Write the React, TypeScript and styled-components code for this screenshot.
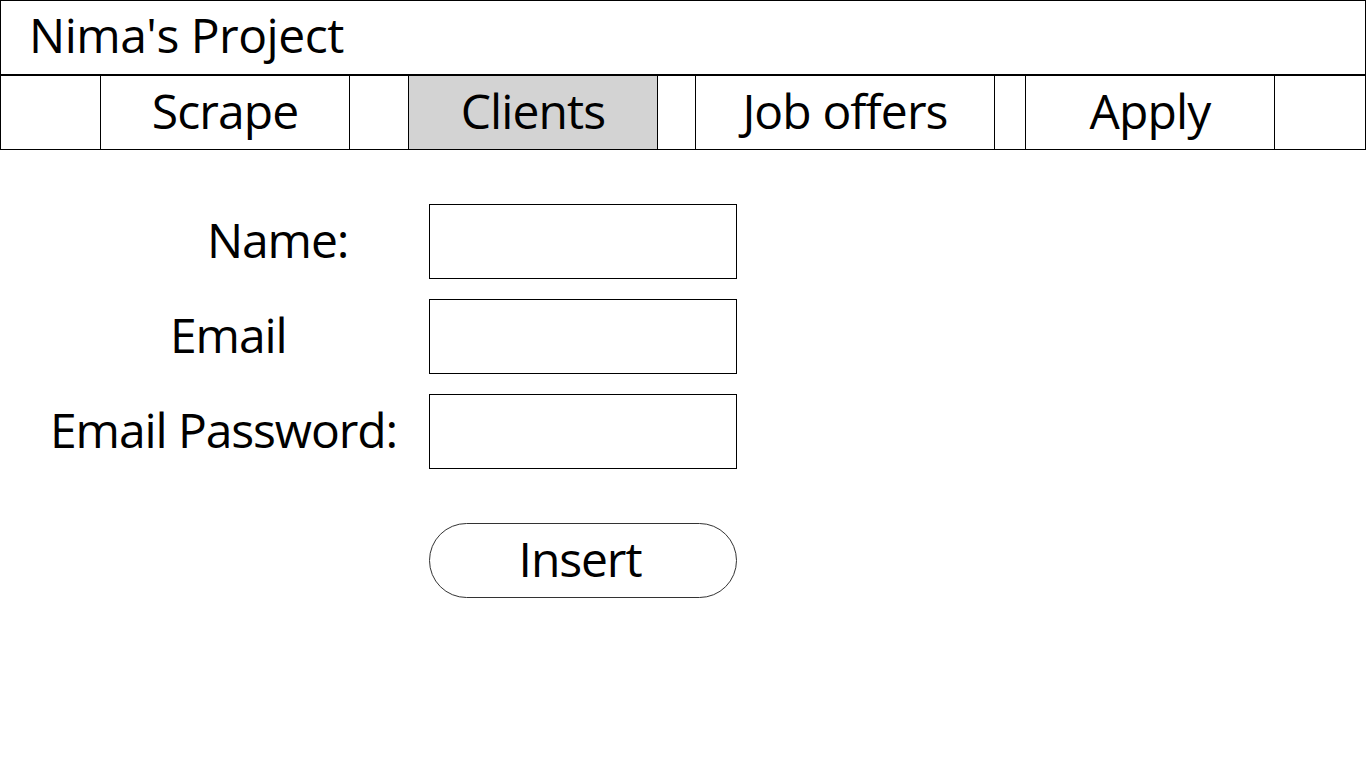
import * as React from 'react';
import styled, { createGlobalStyle } from 'styled-components';

const GlobalStyle = createGlobalStyle`
  * {
    box-sizing: border-box;
  }
  body {
    margin: 0;
    background: #ffffff;
    color: #000000;
    font-family: "Open Sans", "Noto Sans", sans-serif;
  }
`;

const Page = styled.div`
  width: 1366px;
  min-height: 768px;
`;

const Header = styled.header`
  height: 75px;
  border: 1px solid #000;
  display: flex;
  align-items: center;
  padding: 0 0 6px 28px;
  font-size: 48px;
  letter-spacing: -0.5px;
`;

const Nav = styled.nav`
  height: 75px;
  border: 1px solid #000;
  display: grid;
  grid-template-columns: 99px 250px 58px 250px 37px 300px 30px 250px 1fr;
`;

const Tab = styled.div<{ $active?: boolean; $col: number }>`
  grid-column: ${props => props.$col};
  display: flex;
  align-items: center;
  justify-content: center;
  border-left: 1px solid #000;
  border-right: 1px solid #000;
  background: ${props => (props.$active ? '#d3d3d3' : 'transparent')};
  font-size: 48px;
  letter-spacing: -0.9px;
  padding-bottom: 5px;
  cursor: pointer;
`;

const Form = styled.form`
  margin-top: 54px;
  display: grid;
  grid-template-columns: 429px 308px;
  grid-auto-rows: 75px;
  row-gap: 20px;
`;

const Label = styled.label<{ $indent: number }>`
  grid-column: 1;
  display: flex;
  align-items: center;
  padding-left: ${props => props.$indent}px;
  padding-bottom: 4px;
  font-size: 48px;
  letter-spacing: -1.1px;
  white-space: nowrap;
`;

const Input = styled.input`
  grid-column: 2;
  width: 308px;
  height: 75px;
  border: 1px solid #000;
  margin: 0;
  padding: 0 12px;
  font-family: inherit;
  font-size: 28px;
  outline: none;
`;

const InsertButton = styled.button`
  grid-column: 2;
  margin-top: 34px;
  width: 308px;
  height: 75px;
  border: 1px solid #333;
  border-radius: 38px;
  background: #fff;
  color: #000;
  font-family: inherit;
  font-size: 48px;
  letter-spacing: -1.1px;
  padding: 0 6px 4px 0;
  cursor: pointer;
`;

const tabs = [
  { title: 'Scrape', col: 2 },
  { title: 'Clients', col: 4, active: true },
  { title: 'Job offers', col: 6 },
  { title: 'Apply', col: 8 },
];

const fields = [
  { label: 'Name:', indent: 207, type: 'text' },
  { label: 'Email', indent: 170, type: 'email' },
  { label: 'Email Password:', indent: 50, type: 'password' },
];

export default function App() {
  return (
    <Page>
      <GlobalStyle />
      <Header>Nima's Project</Header>
      <Nav>
        {tabs.map(tab => (
          <Tab key={tab.title} $col={tab.col} $active={tab.active}>
            {tab.title}
          </Tab>
        ))}
      </Nav>
      <Form onSubmit={e => e.preventDefault()}>
        {fields.map(field => (
          <React.Fragment key={field.label}>
            <Label $indent={field.indent}>{field.label}</Label>
            <Input type={field.type} />
          </React.Fragment>
        ))}
        <InsertButton type="submit">Insert</InsertButton>
      </Form>
    </Page>
  );
}
